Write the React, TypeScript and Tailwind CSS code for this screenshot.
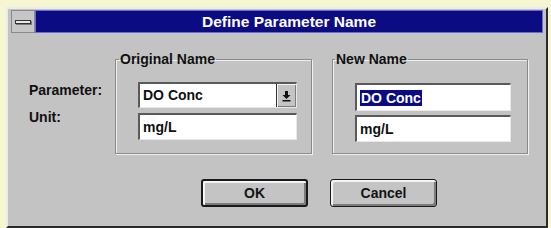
import React from "react"

const font = { fontFamily: '"Liberation Sans", Arial, sans-serif' }

function Sunken({ w, h, children }: { w: string; h: string; children?: React.ReactNode }) {
  return (
    <div
      className={`${w} ${h} bg-white border-t-2 border-l-2 border-t-[#5a5a5a] border-l-[#5a5a5a] border-b border-r border-b-[#e8e8e8] border-r-[#e8e8e8] flex items-center pl-[3px]`}
    >
      {children}
    </div>
  )
}

function Btn({ label, def }: { label: string; def?: boolean }) {
  return (
    <div
      className={`w-[107px] h-[28px] rounded-[3px] bg-[#c4c4c4] ${def ? "border-2" : "border"} border-[#1a1a1a] shadow-[inset_2px_2px_0_#f4f4f4,inset_-2px_-2px_0_#7c7c7c] flex items-center justify-center text-[14px] font-bold text-[#141414]`}
    >
      {label}
    </div>
  )
}

export default function App() {
  return (
    <div className="w-[551px] h-[228px] bg-[#f6f6d2] pl-[6px] pt-[7px] pr-[3px]" style={font}>
      <div className="h-full bg-[#c3c3c3] border-l-2 border-t-2 border-l-[#ececec] border-t-[#ececec] border-r-2 border-r-[#2a2a2a] border-b-2 border-b-[#2a2a2a] flex flex-col pt-[1px] px-[3px]">
        {/* title bar */}
        <div className="h-[23px] flex">
          <div className="w-[24px] h-full bg-[#c6c6c6] border border-[#8a8a8a] flex items-center justify-center">
            <div className="w-[16px] h-[4px] bg-[#e8e8e8] border border-[#333] shadow-[1px_1px_0_#777]" />
          </div>
          <div className="flex-1 bg-[#0b0b84] border border-[#6a6ad0] flex items-center justify-center">
            <span className="text-white font-bold text-[15.5px] leading-none">Define Parameter Name</span>
          </div>
        </div>

        {/* body */}
        <div className="flex items-start pl-[18px]">
          <div className="w-[86px] flex flex-col pt-[49px] text-[14px] font-bold text-[#111] leading-[16px]">
            <span>Parameter:</span>
            <span className="mt-[11px]">Unit:</span>
          </div>

          <fieldset className="mt-[18px] w-[197px] h-[103px] border border-[#8a8a8a] shadow-[1px_1px_0_#f0f0f0,inset_1px_1px_0_#f0f0f0]">
            <legend className="ml-[3px] px-[1px] text-[14px] font-bold leading-[16px] text-[#111]">Original Name</legend>
            <div className="mt-[15px] pl-[22px] flex flex-col gap-[5px]">
              <div className="w-[159px] h-[26px] bg-white border-t-2 border-l-2 border-t-[#5a5a5a] border-l-[#5a5a5a] border-b border-r border-b-[#e8e8e8] border-r-[#e8e8e8] flex items-center">
                <span className="flex-1 pl-[3px] text-[14px] font-bold text-[#111]">DO Conc</span>
                <div className="w-[20px] h-full bg-[#c4c4c4] border-l border-[#333] shadow-[inset_1px_1px_0_#f4f4f4,inset_-1px_-1px_0_#7c7c7c] flex items-center justify-center">
                  <svg width="9" height="12" viewBox="0 0 9 12">
                    <path d="M3 1h3v4h2.5L4.5 9 0.5 5H3z" fill="#111" />
                    <rect x="0.5" y="10" width="8" height="1.5" fill="#111" />
                  </svg>
                </div>
              </div>
              <Sunken w="w-[159px]" h="h-[27px]">
                <span className="text-[14px] font-bold text-[#111]">mg/L</span>
              </Sunken>
            </div>
          </fieldset>

          <fieldset className="ml-[20px] mt-[18px] w-[196px] h-[103px] border border-[#8a8a8a] shadow-[1px_1px_0_#f0f0f0,inset_1px_1px_0_#f0f0f0]">
            <legend className="ml-[2px] px-[1px] text-[14px] font-bold leading-[16px] text-[#111]">New Name</legend>
            <div className="mt-[16px] pl-[22px] flex flex-col gap-[4px]">
              <Sunken w="w-[156px]" h="h-[28px]">
                <span className="bg-[#0a0a84] text-white text-[14px] font-bold leading-[16px] px-[1px]">DO Conc</span>
              </Sunken>
              <Sunken w="w-[156px]" h="h-[27px]">
                <span className="text-[14px] font-bold text-[#111]">mg/L</span>
              </Sunken>
            </div>
          </fieldset>
        </div>

        {/* buttons */}
        <div className="flex gap-[22px] pl-[190px] mt-[25px]">
          <Btn label="OK" def />
          <Btn label="Cancel" />
        </div>
      </div>
    </div>
  )
}
